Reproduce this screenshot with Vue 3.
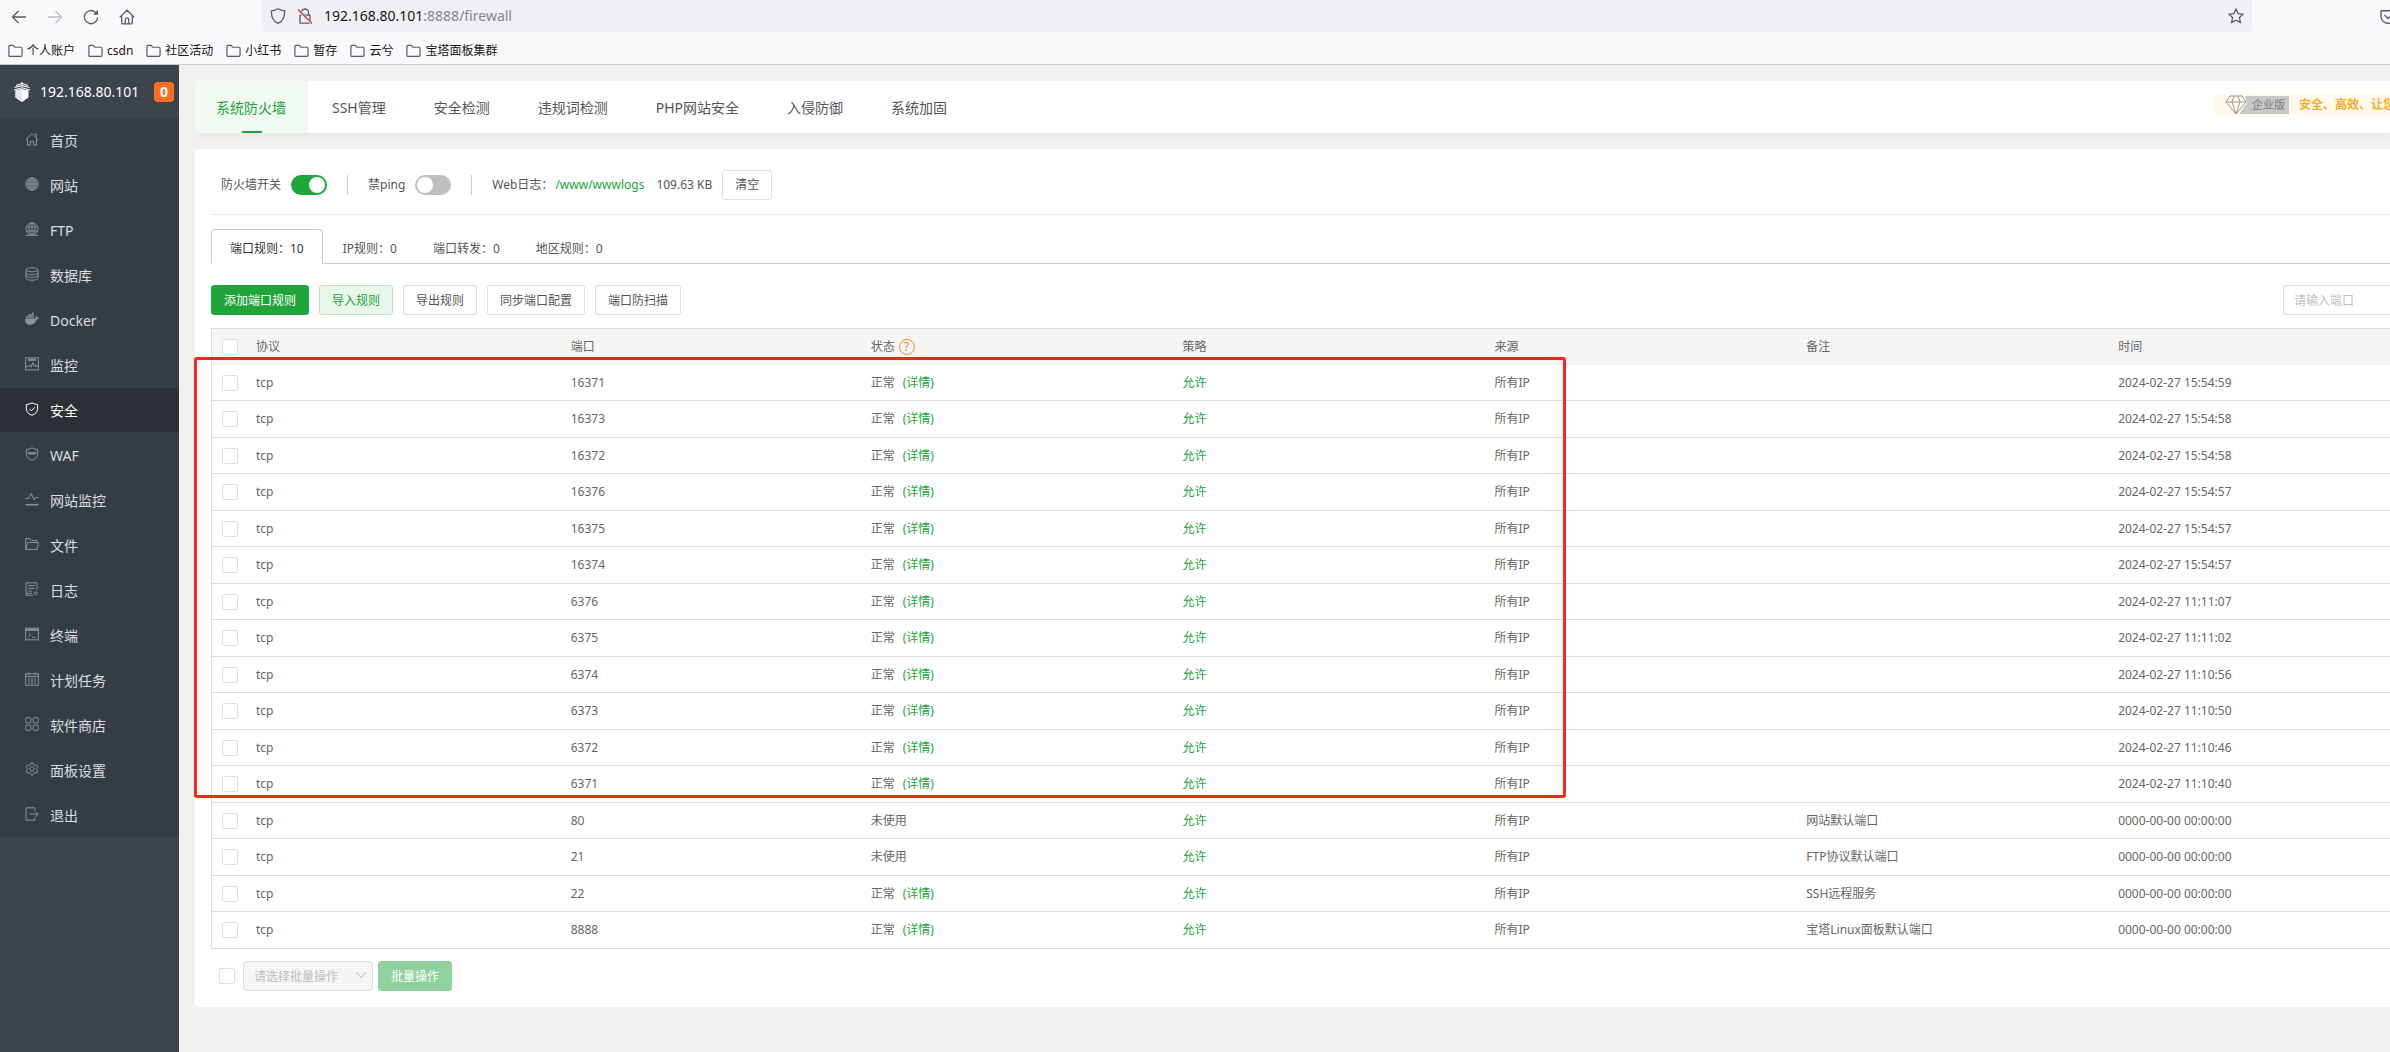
<script setup>
const bookmarks = ['个人账户', 'csdn', '社区活动', '小红书', '暂存', '云兮', '宝塔面板集群']

const menu = [
  { name: '首页', icon: '<path d="M.8 7.600 7 1.400l6.200 6.200M2.500 6.500v6.700h2.800V9.300h3.400v3.900h2.800V6.500M9.800 2h1.700v2.600"/>' },
  { name: '网站', icon: '<circle cx="7" cy="7" r="6.200" fill="currentColor" fill-opacity=".3"/><path d="M1 7h12M7 1v12M2 3.900h10M2 10.100h10"/><ellipse cx="7" cy="7" rx="3" ry="6.200"/>' },
  { name: 'FTP', icon: '<circle cx="7" cy="6.800" r="6"/><path d="M1 5h12M1 9h12M7 1v12M.5 13.300h13"/><ellipse cx="7" cy="6.800" rx="3" ry="6"/>' },
  { name: '数据库', icon: '<ellipse cx="7" cy="2.800" rx="6" ry="2"/><path d="M1 2.800v8.400c0 1.100 2.700 2 6 2s6-.9 6-2V2.800M1 5.600c0 1.100 2.700 2 6 2s6-.9 6-2M1 8.400c0 1.100 2.700 2 6 2s6-.9 6-2"/>' },
  { name: 'Docker', icon: '<path stroke="none" fill="currentColor" d="M0 6.500H10.300C10.900 6 10.900 5 10.600 4.300L11.300 3.700C12 4.200 12.300 4.800 12.400 5.500C13 5.400 13.600 5.500 14 5.800C13.600 6.800 12.900 7.200 11.800 7.300C10.800 10.700 8.500 12.800 5 12.800C1.800 12.800 0 10.500 0 6.500zM1.200 4.300h1.600v1.700H1.200zM3.200 4.300h1.600v1.700H3.200zM5.200 4.300h1.600v1.700H5.200zM7.200 4.300h1.600v1.700H7.200zM3.200 2.300h1.600V4H3.200zM5.200 2.300h1.600V4H5.200zM7.200 2.300h1.600V4H7.200zM7.200.5h1.600V2H7.200z"/>' },
  { name: '监控', icon: '<rect x=".6" y=".9" width="12.800" height="12"/><path d="M3 2.800h8" stroke-width="2"/><path d="M.6 9.500h2.300l1.500-1.500 1.400 2.400 2-5 1.700 4.600 1.400-2.300 1 1.800h1.500"/>' },
  { name: '安全', active: true, icon: '<path d="M7 .8c1.600 1 3.500 1.600 5.600 1.700v4.700c0 2.800-2.300 4.800-5.600 6.100C3.700 12 1.400 10 1.400 7.200V2.500C3.500 2.400 5.400 1.800 7 .8z"/><path d="m4.300 6.900 2 2 3.600-3.700"/>' },
  { name: 'WAF', icon: '<path d="M7 .8c1.600 1 3.500 1.600 5.600 1.700v4.700c0 2.800-2.300 4.800-5.600 6.100C3.700 12 1.400 10 1.400 7.200V2.500C3.500 2.400 5.400 1.800 7 .8z"/><path d="M3 6.300h8" stroke-width="2.200"/>' },
  { name: '网站监控', icon: '<path d="M.5 6.500h3l2.700-5 3 6.500 1.300-2.500h3"/><path d="M.5 12.700h13" stroke-width="1.500"/>' },
  { name: '文件', icon: '<path d="M1.500 12.400H.7V1.600h4.200l1.500 1.800h5.300v2M.9 12.400 2.600 5.500h10.900l-1.400 6.900z"/>' },
  { name: '日志', icon: '<path d="M8 13.300H1V.8h11v7M3.200 3.600h6.600M3.200 6.300h6.600M3.200 9h3.500M1 11.300h6"/><circle cx="10.800" cy="11.400" r="1.500"/>' },
  { name: '终端', icon: '<rect x=".6" y="1.200" width="12.800" height="11.600"/><path d="M.6 2.800h12.800" stroke-width="2.200"/><path d="M3.500 6l2.200 1.800-2.200 1.800M7 10.300h3.500"/>' },
  { name: '计划任务', icon: '<rect x=".6" y="1.800" width="12.800" height="11.400"/><path d="M.6 4.500h12.800M4 .3v2.500M10 .3v2.500"/><path d="M3 6.900h8M3 9h8M3 11.100h8" stroke-dasharray="2 1"/>' },
  { name: '软件商店', icon: '<rect x=".7" y=".7" width="5.200" height="5.200" rx="1"/><rect x="8.100" y=".7" width="5.200" height="5.200" rx="1"/><rect x=".7" y="8.100" width="5.200" height="5.200" rx="1"/><rect x="8.100" y="8.100" width="5.200" height="5.200" rx="1"/>' },
  { name: '面板设置', icon: '<path d="M5.300 2.600 6 1h2l.7 1.600 1.300.7 1.700-.2 1.100 1.800-1 1.400v1.400l1 1.400-1.100 1.800-1.700-.2-1.300.7L8 13H6l-.7-1.600-1.300-.7-1.700.2-1.100-1.800 1-1.400V6.300l-1-1.400 1.100-1.800 1.700.2z"/><circle cx="7" cy="7" r="2.200"/>' },
  { name: '退出', icon: '<path d="M9.800 3.500V.8H1v12.400h8.800v-2.700M4.500 7h8.700M10.500 4.300 13.200 7l-2.700 2.700"/>' },
]

const tabs = ['系统防火墙', 'SSH管理', '安全检测', '违规词检测', 'PHP网站安全', '入侵防御', '系统加固']
const ruleTabs = ['端口规则：10', 'IP规则：0', '端口转发：0', '地区规则：0']

const rule = (port, time, used = true, note = '') => ({ port, time, used, note })
const none = '0000-00-00 00:00:00'
const rules = [
  rule('16371', '2024-02-27 15:54:59'),
  rule('16373', '2024-02-27 15:54:58'),
  rule('16372', '2024-02-27 15:54:58'),
  rule('16376', '2024-02-27 15:54:57'),
  rule('16375', '2024-02-27 15:54:57'),
  rule('16374', '2024-02-27 15:54:57'),
  rule('6376', '2024-02-27 11:11:07'),
  rule('6375', '2024-02-27 11:11:02'),
  rule('6374', '2024-02-27 11:10:56'),
  rule('6373', '2024-02-27 11:10:50'),
  rule('6372', '2024-02-27 11:10:46'),
  rule('6371', '2024-02-27 11:10:40'),
  rule('80', none, false, '网站默认端口'),
  rule('21', none, false, 'FTP协议默认端口'),
  rule('22', none, true, 'SSH远程服务'),
  rule('8888', none, true, '宝塔Linux面板默认端口'),
]
</script>

<template>
  <div class="window">
    <header class="browser">
      <div class="nav-row">
        <div class="nav-buttons">
          <button aria-label="后退"><svg viewBox="0 0 16 16"><path d="M15 8H1.500M7.500 2 1.500 8l6 6" /></svg></button>
          <button aria-label="前进" disabled><svg viewBox="0 0 16 16"><path d="M1 8h13.500M8.500 2l6 6-6 6" /></svg></button>
          <button aria-label="刷新"><svg viewBox="0 0 16 16"><path d="M14.600 8.500A6.600 6.600 0 1 1 12.500 3.300L14 4.800" /><path d="M15 .8v5H10z" fill="currentColor" stroke="none" /></svg></button>
          <button aria-label="主页"><svg viewBox="0 0 16 16"><path d="M.8 8.200 8 1.200l7.200 7M2.700 6.500v7.300c0 .7.4 1 1 1h8.600c.6 0 1-.3 1-1V6.500M6.300 14.500v-4c0-2.200 3.400-2.200 3.400 0v4" /></svg></button>
        </div>
        <div class="url-bar">
          <svg class="i16" viewBox="0 0 16 16"><path d="M8 .8c2 1.200 4.200 1.800 6.600 2 .2 5.500-1.300 10.200-6.600 12.500C2.700 13 1.200 8.300 1.400 2.800 3.800 2.600 6 2 8 .8z" /></svg>
          <svg class="i16" viewBox="0 0 16 16"><path d="M3 7.200h10v8H3zM4.500 7V4.500a3.500 3.500 0 0 1 7 0V7" /><path d="m1 2 13.500 13.500" stroke="#f0f0f4" stroke-width="2.500" /><path d="m1 1.500 14 14" stroke="#e22850" /></svg>
          <p class="url"><b>192.168.80.101</b>:8888/firewall</p>
          <svg class="i16" viewBox="0 0 16 16"><path d="m8 1 2.100 4.600 5 .6-3.700 3.400 1 5L8 12.200l-4.400 2.400 1-5L.9 6.200l5-.6z" /></svg>
        </div>
        <svg class="pocket" viewBox="0 0 16 16"><path d="M2.500 1.700h11c.9 0 1.500.6 1.500 1.500v4a7 7 0 0 1-14 0v-4c0-.9.6-1.500 1.500-1.500z" /><path d="M4.500 6 8 9.500 11.500 6" /></svg>
      </div>
      <nav class="bookmarks">
        <a v-for="b in bookmarks" :key="b" href="#">
          <svg viewBox="0 0 16 14"><path d="M1 11.500V2.300C1 1.500 1.500 1 2.300 1h3.200l1.700 2h6.500c.8 0 1.300.5 1.300 1.300v7.200c0 .8-.5 1.300-1.300 1.300H2.300C1.500 12.800 1 12.300 1 11.500z" /></svg>{{ b }}
        </a>
      </nav>
    </header>

    <div class="panel">
      <aside>
        <div class="host">
          <svg viewBox="0 0 18 20"><path d="M9 0v4M3 3.500 9 1.500l6 2M1.500 5.500 9 3.600l7.500 1.900M1 8l8-2.200L17 8" fill="none" stroke="#fff" stroke-width="1.100" /><path d="M2.500 8.600 9 7l6.500 1.600v7L9 20l-6.500-4.400z" fill="#fff" /><path d="M9 7v13l-6.500-4.400v-7z" fill="#e3e5e7" /></svg>
          <span>192.168.80.101</span>
          <b>0</b>
        </div>
        <nav class="menu">
          <a v-for="m in menu" :key="m.name" href="#" :class="{ active: m.active }">
            <svg viewBox="0 0 14 14" v-html="m.icon"></svg>{{ m.name }}
          </a>
        </nav>
      </aside>

      <main>
        <nav class="tabs">
          <a v-for="(t, i) in tabs" :key="t" href="#" :class="{ active: i === 0 }">{{ t }}</a>
          <div class="edition">
            <svg viewBox="0 0 64 20">
              <path d="M20 1h44v18H14l8-11z" fill="#c8c8c8" />
              <path d="M5 1h12l4 6-10 12L1 7zM1 7h20M7 7l4 12 4-12-2-6M7 7l2-6" fill="#fff9ec" stroke="#999" />
            </svg>
            <span>企业版</span>
            <strong>安全、高效、让您</strong>
          </div>
        </nav>

        <section class="card">
          <div class="controls">
            <label>防火墙开关<input type="checkbox" class="switch" checked></label>
            <label>禁ping<input type="checkbox" class="switch"></label>
            <div class="log">
              <span>Web日志：</span><a href="#">/www/wwwlogs</a><span class="size">109.63 KB</span>
              <button class="btn">清空</button>
            </div>
          </div>

          <nav class="rule-tabs">
            <a v-for="(t, i) in ruleTabs" :key="t" href="#" :class="{ active: i === 0 }">{{ t }}</a>
          </nav>

          <div class="toolbar">
            <button class="btn primary">添加端口规则</button>
            <button class="btn soft">导入规则</button>
            <button class="btn">导出规则</button>
            <button class="btn">同步端口配置</button>
            <button class="btn">端口防扫描</button>
            <input type="text" class="search" placeholder="请输入端口" aria-label="端口">
          </div>

          <div class="table-wrap">
            <table>
              <colgroup>
                <col class="c-check"><col class="c-proto"><col class="c-port">
                <col class="c-mid"><col class="c-mid"><col class="c-mid"><col class="c-mid"><col>
              </colgroup>
              <thead>
                <tr>
                  <th class="check"><input type="checkbox" class="box" aria-label="全选"></th>
                  <th>协议</th>
                  <th>端口</th>
                  <th><div class="state">状态<span class="help">?</span></div></th>
                  <th>策略</th>
                  <th>来源</th>
                  <th>备注</th>
                  <th>时间</th>
                </tr>
              </thead>
              <tbody>
                <tr v-for="r in rules" :key="r.port">
                  <td class="check"><input type="checkbox" class="box" :aria-label="r.port"></td>
                  <td>tcp</td>
                  <td>{{ r.port }}</td>
                  <td v-if="r.used">正常<a href="#" class="detail">(详情)</a></td>
                  <td v-else>未使用</td>
                  <td><a href="#">允许</a></td>
                  <td>所有IP</td>
                  <td>{{ r.note }}</td>
                  <td>{{ r.time }}</td>
                </tr>
              </tbody>
            </table>
            <div class="marker"></div>
          </div>

          <div class="batch">
            <input type="checkbox" class="box" aria-label="全选">
            <div class="select">
              <select disabled aria-label="批量操作"><option>请选择批量操作</option></select>
              <svg viewBox="0 0 12 8"><path d="m1 1 5 5.500L11 1" /></svg>
            </div>
            <button class="btn primary" disabled>批量操作</button>
          </div>
        </section>
      </main>
    </div>
  </div>
</template>

<style>
body {
  margin: 0;
  overflow-x: hidden;
}
</style>

<style scoped>
* {
  box-sizing: border-box;
}
.window {
  display: flex;
  flex-direction: column;
  min-height: 100vh;
  font: 12px/18px "Noto Sans", "Noto Sans CJK SC", sans-serif;
  color: #666;
  background: #f1f1f1;
  overflow: hidden;
}
a {
  color: #20a53a;
  text-decoration: none;
}
button,
input,
select {
  font: inherit;
  margin: 0;
}
svg {
  flex: none;
  fill: none;
  stroke: currentColor;
}

/* Browser chrome */
.browser {
  background: #f9f9fb;
  border-bottom: 1px solid #c9c9cc;
  color: #5b5b66;
}
.nav-row {
  display: flex;
  height: 34px;
  align-items: flex-start;
}
.nav-buttons {
  display: flex;
  flex: none;
  gap: 20px;
  width: 262px;
  padding: 9px 0 0 11px;
}
.nav-buttons button {
  width: 16px;
  height: 16px;
  padding: 0;
  border: 0;
  background: none;
  color: #5b5b66;
}
.nav-buttons button:disabled {
  color: #bdbdc3;
}
.nav-buttons svg {
  display: block;
  width: 16px;
  height: 16px;
  stroke-width: 1.3;
}
.url-bar {
  display: flex;
  flex: 1;
  align-items: center;
  height: 32px;
  gap: 11px;
  padding: 0 8px;
  border-radius: 0 0 4px 4px;
  background: #f0f0f4;
}
.i16 {
  width: 16px;
  height: 16px;
  stroke-width: 1.3;
}
.url {
  flex: 1;
  margin: 0;
  font-size: 14px;
  color: #85858d;
}
.url b {
  font-weight: 400;
  color: #15141a;
}
.pocket {
  width: 16px;
  height: 16px;
  margin: 9px -6px 0 128px;
  stroke-width: 1.4;
}
.bookmarks {
  display: flex;
  gap: 13px;
  height: 30px;
  padding: 3px 0 0 8px;
}
.bookmarks a {
  display: flex;
  align-items: center;
  gap: 4px;
  color: #15141a;
}
.bookmarks svg {
  width: 15px;
  height: 14px;
  color: #5b5b66;
  stroke-width: 1.3;
}

/* Sidebar */
.panel {
  display: flex;
  flex: 1;
}
aside {
  flex: none;
  width: 179px;
  background: #3c444d;
}
.host {
  display: flex;
  align-items: center;
  height: 53px;
  padding: 0 5px 0 13px;
  color: #fff;
  font-size: 14px;
}
.host svg {
  width: 18px;
  height: 20px;
  margin-right: 9px;
  stroke: none;
}
.host b {
  width: 20px;
  margin-left: auto;
  border-radius: 4px;
  background: #ff6c23;
  line-height: 20px;
  text-align: center;
}
.menu {
  background: #353d44;
}
.menu a {
  display: flex;
  align-items: center;
  gap: 11px;
  height: 44px;
  margin-bottom: 1px;
  padding: 2px 0 0 25px;
  font-size: 14px;
  color: #dcdee0;
}
.menu svg {
  width: 14px;
  height: 14px;
  margin-bottom: 4px;
  color: #8e9398;
}
.menu .active {
  background: #2c3138;
  color: #fff;
}
.menu .active svg {
  color: #fff;
}

/* Top tabs */
main {
  flex: 1;
  min-width: 0;
  padding: 16px 0 0 16px;
}
.tabs {
  display: flex;
  height: 52px;
  border-radius: 4px 0 0 4px;
  background: #fff;
  box-shadow: 0 4px 6px rgba(0, 0, 0, 0.03);
}
.tabs a {
  position: relative;
  height: 52px;
  padding: 0 24px;
  font-size: 14px;
  line-height: 54px;
  color: #555;
  white-space: nowrap;
}
.tabs .active {
  padding: 0 22px 0 21px;
  border-radius: 4px 0 0 4px;
  background: #f0faf3;
  color: #20a53a;
}
.tabs .active::after {
  content: "";
  position: absolute;
  bottom: 0;
  left: calc(50% - 10px);
  width: 20px;
  height: 2px;
  background: #20a53a;
}
.edition {
  position: relative;
  display: flex;
  align-items: center;
  width: 175px;
  height: 22px;
  margin: 13px 0 0 auto;
  padding-left: 10px;
  border-radius: 4px 0 0 4px;
  background: #fff9ec;
  overflow: hidden;
  white-space: nowrap;
}
.edition svg {
  width: 64px;
  height: 20px;
  stroke: none;
}
.edition span {
  position: absolute;
  left: 37px;
  font-size: 11px;
  font-weight: 500;
  color: #888;
}
.edition strong {
  margin-left: 10px;
  color: #f3ae2b;
}

/* Content card */
.card {
  margin-top: 16px;
  padding: 0 0 16px 16px;
  border-radius: 4px 0 0 4px;
  background: #fff;
}
.controls {
  display: flex;
  align-items: center;
  height: 66px;
  padding: 6px 0 0 10px;
  border-bottom: 1px solid #ebebeb;
  color: #555;
}
.controls label {
  display: flex;
  align-items: center;
  gap: 10px;
  margin-right: 20px;
  padding-right: 20px;
  border-right: 1px solid #ccc;
}
.switch {
  appearance: none;
  width: 36px;
  height: 20px;
  padding: 2px;
  border-radius: 10px;
  background: #bfbfbf;
}
.switch::before {
  content: "";
  display: block;
  width: 16px;
  height: 16px;
  border-radius: 8px;
  background: #fff;
}
.switch:checked {
  background: #20a53a;
}
.switch:checked::before {
  margin-left: 16px;
}
.log {
  display: flex;
  align-items: center;
}
.log a {
  margin: 0 2px;
}
.size {
  margin: 0 10px;
}
.btn {
  height: 30px;
  padding: 1px 12px 0;
  border: 1px solid #dcdfe6;
  border-radius: 3px;
  background: #fff;
  color: #555;
  white-space: nowrap;
}
.soft {
  border-color: #bce4c4;
  background: #e9f6eb;
  color: #20a53a;
}
.primary {
  border-color: #20a53a;
  background: #20a53a;
  color: #fff;
}
.primary:disabled {
  border-color: #90d29d;
  background: #90d29d;
}
.rule-tabs {
  display: flex;
  height: 35px;
  margin-top: 14px;
  box-shadow: inset 0 -1px #c9c9d6;
}
.rule-tabs a {
  height: 35px;
  padding: 0 18px;
  line-height: 39px;
  color: #555;
}
.rule-tabs .active {
  margin-right: 2px;
  border: 1px solid #c9c9d6;
  border-bottom-color: #fff;
  border-radius: 4px 4px 0 0;
  background: #fff;
  line-height: 37px;
  color: #333;
}
.toolbar {
  display: flex;
  gap: 10px;
  margin: 21px 0 13px;
}
.search {
  width: 107px;
  height: 30px;
  margin-left: auto;
  padding: 0 10px;
  border: 1px solid #dcdfe6;
  border-right: 0;
  border-radius: 4px 0 0 4px;
}
.search::placeholder {
  color: #bfbfbf;
}

/* Rule table */
.table-wrap {
  position: relative;
}
table {
  width: 100%;
  table-layout: fixed;
  border-collapse: separate;
  border-spacing: 0;
  border: 1px solid #dcdcdc;
  border-width: 1px 0 0 1px;
}
.c-check {
  width: 36px;
}
.c-proto {
  width: 14.45%;
}
.c-port {
  width: 13.77%;
}
.c-mid {
  width: 14.32%;
}
th,
td {
  height: 36px;
  padding: 0 8px;
  border-bottom: 1px solid #dcdcdc;
  text-align: left;
  font-weight: 400;
  white-space: nowrap;
}
th {
  border-color: #ebeef5;
  background: #f5f5f5;
}
tbody tr:nth-child(even) td {
  height: 37px;
}
th.check,
td.check {
  padding: 0 10px;
}
.box {
  appearance: none;
  display: block;
  width: 16px;
  height: 16px;
  border: 1px solid #dcdfe6;
  border-radius: 2px;
  background: #fff;
}
.state {
  display: flex;
  align-items: center;
  gap: 4px;
}
.help {
  width: 16px;
  height: 16px;
  border: 1px solid #ff8c1a;
  border-radius: 8px;
  line-height: 14px;
  text-align: center;
  color: #ff8c1a;
}
.detail {
  margin-left: 8px;
}
.marker {
  position: absolute;
  top: 29px;
  left: -17px;
  width: 1372px;
  height: 441px;
  border: 3px solid #ff2415;
  border-radius: 3px;
  pointer-events: none;
}

/* Batch actions */
.batch {
  display: flex;
  align-items: center;
  margin-top: 12px;
  padding-left: 8px;
}
.select {
  position: relative;
  margin: 0 5px 0 8px;
}
.select select {
  appearance: none;
  display: block;
  width: 130px;
  height: 30px;
  padding: 1px 10px 0;
  border: 1px solid #dcdcdc;
  border-radius: 4px;
  background: #f5f5f5;
  color: #bfbfbf;
  opacity: 1;
}
.select svg {
  position: absolute;
  top: 10px;
  right: 6px;
  width: 12px;
  height: 8px;
  color: #bfbfbf;
}
</style>
